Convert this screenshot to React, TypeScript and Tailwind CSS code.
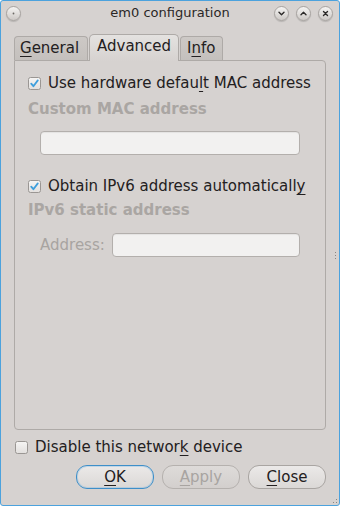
import React from "react";

const U = ({ children }: { children: React.ReactNode }) => (
  <span className="underline decoration-[1px] underline-offset-[3px]">{children}</span>
);

function Check({ checked }: { checked?: boolean }) {
  return (
    <svg width="13" height="13" viewBox="0 0 13 13" className="shrink-0">
      <defs>
        <linearGradient id="cbg" x1="0" y1="0" x2="0" y2="1">
          <stop offset="0" stopColor="#f6f5f4" />
          <stop offset="1" stopColor="#e2dfdd" />
        </linearGradient>
      </defs>
      <rect x="0.5" y="0.5" width="12" height="12" rx="2" fill="url(#cbg)" stroke="#9a9693" />
      {checked && (
        <path d="M3.2 6.6 L5.4 9.2 L9.8 3.4" fill="none" stroke="#3f9fdc" strokeWidth="1.8" strokeLinecap="round" strokeLinejoin="round" />
      )}
    </svg>
  );
}

function TitleBtn({ kind }: { kind: "dot" | "down" | "up" | "x" }) {
  return (
    <div className="w-[15px] h-[15px] rounded-full border border-[#a7a3a0] bg-gradient-to-b from-[#f5f4f3] to-[#cdc9c6] flex items-center justify-center shadow-[0_1px_1px_rgba(0,0,0,0.15)]">
      <svg width="9" height="9" viewBox="0 0 9 9">
        {kind === "dot" && <circle cx="4.5" cy="4.5" r="0.9" fill="#6b6764" />}
        {kind === "down" && <path d="M2 3.3 L4.5 5.8 L7 3.3" fill="none" stroke="#2c2a29" strokeWidth="1.4" strokeLinecap="round" strokeLinejoin="round" />}
        {kind === "up" && <path d="M2 5.7 L4.5 3.2 L7 5.7" fill="none" stroke="#2c2a29" strokeWidth="1.4" strokeLinecap="round" strokeLinejoin="round" />}
        {kind === "x" && <path d="M2.5 2.5 L6.5 6.5 M6.5 2.5 L2.5 6.5" fill="none" stroke="#2c2a29" strokeWidth="1.4" strokeLinecap="round" />}
      </svg>
    </div>
  );
}

function Btn({ children, focus, disabled }: { children: React.ReactNode; focus?: boolean; disabled?: boolean }) {
  return (
    <div
      className={
        "w-[78px] h-[24px] rounded-[11px] flex items-center justify-center text-[15px] leading-[18px] bg-gradient-to-b " +
        (disabled
          ? "border border-[#b5b1ae] from-[#dedbd9] to-[#d3cfcd] text-[#a8a4a1]"
          : focus
          ? "border border-[#3e8fc9] from-[#ebe9e8] to-[#dbd8d6] text-[#232021] shadow-[inset_0_0_0_1px_rgba(120,180,225,0.35)]"
          : "border border-[#a9a5a2] from-[#ebe9e8] to-[#dbd8d6] text-[#232021]")
      }
    >
      {children}
    </div>
  );
}

export default function App() {
  return (
    <div className="relative w-[340px] h-[506px] border border-[#4ca2dd] rounded-[3px] bg-[#d6d2d0] flex flex-col font-['DejaVu_Sans',sans-serif] text-[#232021] overflow-hidden">
      {/* title bar */}
      <div className="grid grid-cols-[1fr_auto_1fr] items-center h-[24px] shrink-0">
        <div className="pl-[5px] flex">
          <TitleBtn kind="dot" />
        </div>
        <div className="text-[13px] leading-[16px] text-[#2a2726] -mt-[1px]">em0 configuration</div>
        <div className="flex justify-end gap-[7px] pr-[6px]">
          <TitleBtn kind="down" />
          <TitleBtn kind="up" />
          <TitleBtn kind="x" />
        </div>
      </div>

      {/* tabs */}
      <div className="mt-[9px] ml-[13px] flex items-end h-[26px] relative z-10 text-[15px] leading-[18px]">
        <div className="w-[74px] h-[24px] border border-b-0 border-[#aeaaa7] rounded-t-[4px] bg-gradient-to-b from-[#cdc9c6] to-[#c4c0bd] pt-[2px] pl-[5px]">
          <U>G</U>eneral
        </div>
        <div className="ml-[1px] w-[90px] h-[27px] -mb-px border border-b-0 border-[#aeaaa7] rounded-t-[5px] bg-gradient-to-b from-[#e4e2e0] to-[#d6d2d0] pt-[2px] pl-[7px]">
          Advanced
        </div>
        <div className="ml-[1px] w-[43px] h-[24px] border border-b-0 border-[#aeaaa7] rounded-t-[4px] bg-gradient-to-b from-[#cdc9c6] to-[#c4c0bd] pt-[2px] pl-[6px]">
          I<U>n</U>fo
        </div>
      </div>

      {/* panel */}
      <div className="ml-[13px] w-[312px] h-[370px] border border-[#aeaaa7] rounded-b-[4px] rounded-tr-[4px] flex flex-col text-[15px] leading-[18px]">
        <div className="mt-[13px] pl-[13px] flex items-center gap-[7px] h-[18px]">
          <Check checked />
          <span>Use hardware defau<U>l</U>t MAC address</span>
        </div>
        <div className="mt-[8px] pl-[13px] font-bold text-[#aaa6a3] h-[18px]">Custom MAC address</div>
        <div className="mt-[13px] mx-[25px] h-[24px] rounded-[4px] border border-[#b3afac] bg-[#f2f1f0] shadow-[inset_0_1px_1px_rgba(0,0,0,0.06)]" />
        <div className="mt-[22px] pl-[13px] flex items-center gap-[7px] h-[18px]">
          <Check checked />
          <span>Obtain IPv6 address automaticall<U>y</U></span>
        </div>
        <div className="mt-[6px] pl-[13px] font-bold text-[#aaa6a3] h-[18px]">IPv6 static address</div>
        <div className="mt-[14px] pl-[25px] pr-[25px] flex items-center h-[24px]">
          <span className="text-[#a8a4a1] w-[72px] shrink-0">Address:</span>
          <div className="flex-1 h-[24px] rounded-[4px] border border-[#b3afac] bg-[#f2f1f0] shadow-[inset_0_1px_1px_rgba(0,0,0,0.06)]" />
        </div>
      </div>

      {/* bottom */}
      <div className="mt-[8px] pl-[14px] flex items-center gap-[7px] h-[18px] text-[15px] leading-[18px]">
        <Check />
        <span>Disable this networ<U>k</U> device</span>
      </div>
      <div className="mt-[9px] pr-[13px] flex justify-end gap-[8px]">
        <Btn focus>
          <U>O</U>K
        </Btn>
        <Btn disabled>
          <U>A</U>pply
        </Btn>
        <Btn>
          <U>C</U>lose
        </Btn>
      </div>

      {/* resize grips */}
      <div className="absolute right-[3px] top-[251px] flex flex-col gap-[2px]">
        <div className="w-[1px] h-[1px] bg-[#8a8683]" />
        <div className="w-[1px] h-[1px] bg-[#8a8683]" />
        <div className="w-[1px] h-[1px] bg-[#8a8683]" />
      </div>
      <div className="absolute right-[2px] bottom-[2px] w-[5px] h-[5px]">
        <div className="absolute right-0 bottom-0 w-[1px] h-[1px] bg-[#8a8683]" />
        <div className="absolute right-[3px] bottom-0 w-[1px] h-[1px] bg-[#8a8683]" />
        <div className="absolute right-0 bottom-[3px] w-[1px] h-[1px] bg-[#8a8683]" />
      </div>
    </div>
  );
}
